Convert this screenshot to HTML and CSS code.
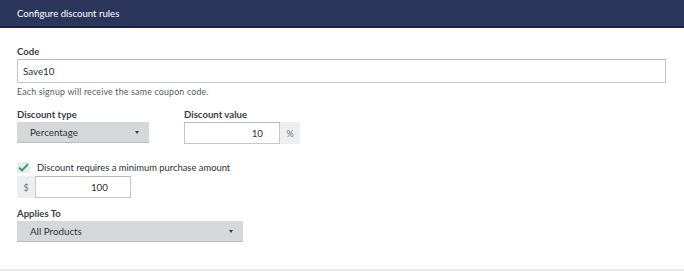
FILE: index.html
```html
<!DOCTYPE html>
<html lang="en">

<head>
  <meta charset="UTF-8" />
  <title>Configure discount rules</title>
  <link rel="stylesheet" href="styles.css">
</head>

<body>
  <div class="modal">
    <div class="modal-header">Configure discount rules</div>

    <div class="modal-body">
      <div class="field">
        <label class="field-label">Code</label>
        <input class="text-input code-input" type="text" value="Save10" />
        <div class="help-text">Each signup will receive the same coupon code.</div>
      </div>

      <div class="field-row">
        <div class="field">
          <label class="field-label">Discount type</label>
          <div class="select type-select">
            <span>Percentage</span>
            <span class="caret"></span>
          </div>
        </div>
        <div class="field">
          <label class="field-label">Discount value</label>
          <div class="input-group">
            <input class="text-input value-input" type="text" value="10" />
            <span class="addon addon-right">%</span>
          </div>
        </div>
      </div>

      <div class="field minimum-field">
        <label class="check-row">
          <span class="checkbox">
            <svg width="11" height="9" viewBox="0 0 11 9">
              <path d="M1 4.6 L4 7.4 L10 1.2" fill="none" stroke="#2c9a6a" stroke-width="1.8" />
            </svg>
          </span>
          Discount requires a minimum purchase amount
        </label>
        <div class="input-group">
          <span class="addon addon-left">$</span>
          <input class="text-input min-input" type="text" value="100" />
        </div>
      </div>

      <div class="field applies-field">
        <label class="field-label">Applies To</label>
        <div class="select applies-select">
          <span>All Products</span>
          <span class="caret"></span>
        </div>
      </div>
    </div>
  </div>
</body>

</html>
```

FILE: styles.css
```css
* {
  box-sizing: border-box;
}

body {
  margin: 0;
  font-family: Lato, 'Noto Sans', sans-serif;
  color: #2d2f33;
  background: #fff;
}

.modal {
  width: 684px;
  height: 271px;
  border-bottom: 2px solid #e6e8ea;
}

.modal-header {
  height: 28px;
  padding: 0 17px;
  display: flex;
  align-items: center;
  background: #2b365d;
  border-bottom: 2px solid #1c2340;
  color: #fff;
  font-size: 9.6px;
}

.modal-body {
  padding: 17px 18px 0 17px;
}

.field-label {
  display: block;
  font-size: 9.6px;
  font-weight: 700;
  margin-bottom: 1px;
  line-height: 13px;
  color: #3a3d41;
}

.text-input {
  height: 24px;
  border: 1px solid #c4c7ca;
  border-top-color: #b8bbbe;
  padding: 0 6px;
  font-family: inherit;
  font-size: 9.8px;
  color: #2d2f33;
  outline: none;
  background: #fff;
}

.code-input {
  width: 649px;
  padding-left: 5px;
}

.help-text {
  margin-top: 4px;
  line-height: 10px;
  font-size: 8.8px;
  letter-spacing: 0.2px;
  color: #55595e;
}

.field-row {
  display: flex;
  gap: 35px;
  margin-top: 11px;
}

.select {
  height: 21px;
  display: flex;
  align-items: center;
  justify-content: space-between;
  padding: 0 10px 0 13px;
  background: #d4d8db;
  border-bottom: 1px solid #b9bdc1;
  font-size: 9.8px;
  color: #2f3236;
}

.type-select {
  width: 132px;
}

.applies-select {
  width: 226px;
}

.caret {
  width: 0;
  height: 0;
  border-left: 2.5px solid transparent;
  border-right: 2.5px solid transparent;
  border-top: 3px solid #3a3d42;
}

.input-group {
  display: flex;
}

.value-input {
  width: 96px;
  height: 22px;
  text-align: right;
  padding-right: 16px;
}

.min-input {
  width: 96px;
  height: 22px;
  text-align: right;
  padding-right: 22px;
}

.addon {
  height: 22px;
  display: flex;
  align-items: center;
  justify-content: center;
  background: #eceeef;
  color: #6b6f74;
  font-size: 9px;
}

.addon-right {
  width: 20px;
}

.addon-left {
  width: 18px;
}

.minimum-field {
  margin-top: 17px;
}

.check-row {
  display: flex;
  align-items: center;
  gap: 7px;
  height: 13px;
  font-size: 9.4px;
  margin-bottom: 2px;
}

.checkbox {
  width: 13px;
  height: 11px;
  display: flex;
  align-items: center;
  justify-content: center;
  background: #e9ebec;
}

.applies-field {
  margin-top: 9px;
}
```
